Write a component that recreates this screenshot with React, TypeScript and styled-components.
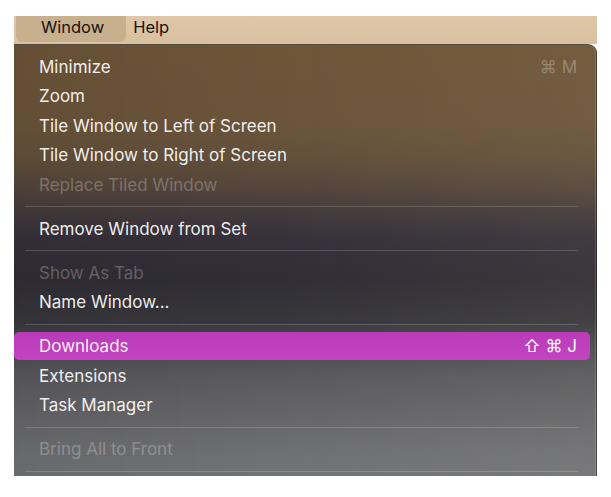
import React from 'react';
import styled, { createGlobalStyle } from 'styled-components';

type Item =
  | { kind: 'item'; label: string; shortcut?: string; disabled?: boolean; active?: boolean }
  | { kind: 'sep' };

const items: Item[] = [
  { kind: 'item', label: 'Minimize', shortcut: '⌘ M' },
  { kind: 'item', label: 'Zoom' },
  { kind: 'item', label: 'Tile Window to Left of Screen' },
  { kind: 'item', label: 'Tile Window to Right of Screen' },
  { kind: 'item', label: 'Replace Tiled Window', disabled: true },
  { kind: 'sep' },
  { kind: 'item', label: 'Remove Window from Set' },
  { kind: 'sep' },
  { kind: 'item', label: 'Show As Tab', disabled: true },
  { kind: 'item', label: 'Name Window...' },
  { kind: 'sep' },
  { kind: 'item', label: 'Downloads', shortcut: '⇧ ⌘ J', active: true },
  { kind: 'item', label: 'Extensions' },
  { kind: 'item', label: 'Task Manager' },
  { kind: 'sep' },
  { kind: 'item', label: 'Bring All to Front', disabled: true },
  { kind: 'sep' },
];

const App = () => {
  return (
    <>
      <GlobalStyle />
      <Screen>
        <MenuBar>
          <MenuTitle $active>Window</MenuTitle>
          <MenuTitle>Help</MenuTitle>
        </MenuBar>
        <Panel>
          {items.map((item, i) =>
            item.kind === 'sep' ? (
              <Separator key={i} />
            ) : (
              <Row key={i} $active={item.active} $disabled={item.disabled}>
                <span>{item.label}</span>
                {item.shortcut && (
                  <Shortcut $active={item.active}>{item.shortcut}</Shortcut>
                )}
              </Row>
            )
          )}
        </Panel>
      </Screen>
    </>
  );
};

export default App;

const GlobalStyle = createGlobalStyle`
  body {
    margin: 0;
    background: #ffffff;
    font-family: Inter, "Liberation Sans", "DejaVu Sans", sans-serif;
  }
`;

const Screen = styled.div`
  width: 611px;
  height: 497px;
  padding: 16px 14px 0 14px;
  box-sizing: border-box;
  overflow: hidden;
`;

const MenuBar = styled.div`
  display: flex;
  align-items: flex-start;
  height: 28px;
  padding-left: 2px;
  background: linear-gradient(180deg, #dec7a8 0%, #d9c09f 100%);
`;

const MenuTitle = styled.div<{ $active?: boolean }>`
  height: 26px;
  box-sizing: border-box;
  display: flex;
  align-items: center;
  padding: ${(p) => (p.$active ? '0 22px 4px 25px' : '0 7px 4px 7px')};
  border-radius: 0 0 6px 6px;
  background: ${(p) => (p.$active ? '#c8b08f' : 'transparent')};
  color: #161310;
  font-size: 16.5px;
`;

const Panel = styled.div`
  height: 432px;
  box-sizing: border-box;
  padding-top: 7px;
  display: flex;
  flex-direction: column;
  overflow: hidden;
  border-top-right-radius: 9px;
  border-top: 1px solid rgba(60, 45, 25, 0.55);
  border-right: 1px solid rgba(40, 35, 30, 0.5);
  box-shadow: inset -1px 0 0 rgba(255, 255, 255, 0.16);
  background:
    linear-gradient(90deg, rgba(0, 0, 0, 0.07) 0%, rgba(0, 0, 0, 0) 45%, rgba(255, 240, 200, 0.05) 100%),
    linear-gradient(
      180deg,
      #6d5538 0%,
      #6b543a 18%,
      #63503b 26%,
      #55463b 33%,
      #433a3b 39%,
      #36303a 45%,
      #302d35 54%,
      #38373c 64%,
      #4a4a4e 70%,
      #5a5a5e 77%,
      #636367 84%,
      #6e6f73 94%,
      #727377 100%
    );
`;

const Row = styled.div<{ $active?: boolean; $disabled?: boolean }>`
  flex: none;
  height: 28px;
  margin: 0.75px 6px 0.75px 0;
  padding: 0 13px 0 25px;
  display: flex;
  align-items: center;
  justify-content: space-between;
  border-radius: 5px;
  font-size: 17px;
  color: ${(p) =>
    p.$disabled ? 'rgba(255, 255, 255, 0.26)' : 'rgba(255, 255, 255, 0.93)'};
  background: ${(p) =>
    p.$active ? 'linear-gradient(180deg, #b93bb9 0%, #c244c1 100%)' : 'transparent'};
`;

const Shortcut = styled.span<{ $active?: boolean }>`
  font-family: Inter, "DejaVu Sans", sans-serif;
  font-size: 17px;
  color: ${(p) => (p.$active ? '#ffffff' : 'rgba(255, 255, 255, 0.28)')};
`;

const Separator = styled.div`
  flex: none;
  height: 1px;
  margin: 6.75px 18px 6.75px 11px;
  background: rgba(255, 255, 255, 0.17);
`;
